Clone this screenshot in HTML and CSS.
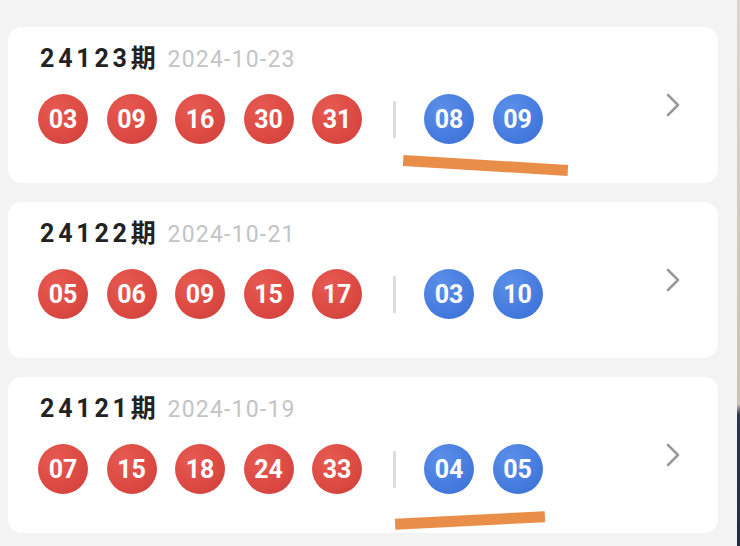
FILE: index.html
```html
<!DOCTYPE html>
<html lang="zh">
<head>
<meta charset="utf-8">
<title>开奖记录</title>
<link rel="stylesheet" href="styles.css">
</head>
<body>
<div class="page">
  <main class="list">
    <section class="card">
      <div class="info">
        <div class="head"><span class="issue">24123期</span><span class="date">2024-10-23</span></div>
        <div class="balls">
          <span class="ball red">03</span><span class="ball red">09</span><span class="ball red">16</span><span class="ball red">30</span><span class="ball red">31</span>
          <span class="sep"></span>
          <span class="ball blue">08</span><span class="ball blue">09</span>
        </div>
      </div>
      <svg class="chev" width="14" height="24" viewBox="0 0 14 24"><path d="M2 2 L12 12 L2 22" fill="none" stroke="#9a9a9a" stroke-width="2.6" stroke-linecap="round" stroke-linejoin="round"/></svg>
      <span class="mark mark1"></span>
    </section>
    <section class="card">
      <div class="info">
        <div class="head"><span class="issue">24122期</span><span class="date">2024-10-21</span></div>
        <div class="balls">
          <span class="ball red">05</span><span class="ball red">06</span><span class="ball red">09</span><span class="ball red">15</span><span class="ball red">17</span>
          <span class="sep"></span>
          <span class="ball blue">03</span><span class="ball blue">10</span>
        </div>
      </div>
      <svg class="chev" width="14" height="24" viewBox="0 0 14 24"><path d="M2 2 L12 12 L2 22" fill="none" stroke="#9a9a9a" stroke-width="2.6" stroke-linecap="round" stroke-linejoin="round"/></svg>
    </section>
    <section class="card">
      <div class="info">
        <div class="head"><span class="issue">24121期</span><span class="date">2024-10-19</span></div>
        <div class="balls">
          <span class="ball red">07</span><span class="ball red">15</span><span class="ball red">18</span><span class="ball red">24</span><span class="ball red">33</span>
          <span class="sep"></span>
          <span class="ball blue">04</span><span class="ball blue">05</span>
        </div>
      </div>
      <svg class="chev" width="14" height="24" viewBox="0 0 14 24"><path d="M2 2 L12 12 L2 22" fill="none" stroke="#9a9a9a" stroke-width="2.6" stroke-linecap="round" stroke-linejoin="round"/></svg>
      <span class="mark mark3"></span>
    </section>
  </main>
  <div class="edge"></div>
</div>
</body>
</html>
```

FILE: styles.css
```css
html, body {
  margin: 0;
  padding: 0;
  background: #f3f3f3;
}
body {
  font-family: Roboto, "Noto Sans CJK SC", sans-serif;
}
.page {
  display: flex;
  width: 740px;
  height: 546px;
  overflow: hidden;
}
.list {
  flex: 1;
  display: flex;
  flex-direction: column;
  gap: 19px;
  padding: 27px 19px 0 8px;
}
.card {
  position: relative;
  display: flex;
  align-items: center;
  justify-content: space-between;
  background: #ffffff;
  border-radius: 14px;
  height: 156px;
  box-sizing: border-box;
  padding: 0 38px 0 30px;
}
.info {
  align-self: flex-start;
  display: flex;
  flex-direction: column;
  gap: 19px;
  padding-top: 16px;
}
.head {
  display: flex;
  align-items: baseline;
  padding-left: 2px;
  height: 32px;
  line-height: 32px;
}
.issue {
  font-family: Roboto, "Noto Sans CJK SC", sans-serif;
  font-weight: 700;
  font-size: 25px;
  letter-spacing: 3.8px;
  color: #222222;
}
.date {
  margin-left: 8px;
  font-size: 23px;
  font-weight: 400;
  color: #c4c4c4;
  letter-spacing: 1.2px;
}
.balls {
  display: flex;
  align-items: center;
  gap: 18.5px;
}
.ball {
  width: 50px;
  height: 50px;
  border-radius: 50%;
  display: flex;
  align-items: center;
  justify-content: center;
  color: #ffffff;
  font-family: Roboto, sans-serif;
  font-weight: 700;
  font-size: 25px;
}
.red {
  background: radial-gradient(circle at 35% 30%, #e65a52 0%, #dc4a43 55%, #cc3f3a 100%);
}
.blue {
  background: radial-gradient(circle at 35% 30%, #5c8fe8 0%, #477ddf 55%, #3a6dd3 100%);
}
.sep {
  width: 3px;
  height: 37px;
  background: #dcdcdc;
  margin: 0 10px 0 12px;
  border-radius: 1px;
}
.chev {
  display: block;
}
.mark {
  position: absolute;
  height: 11px;
  background: #e98e48;
}
.mark1 {
  left: 395px;
  top: 133px;
  width: 165px;
  transform: rotate(3.4deg);
}
.mark3 {
  left: 387px;
  top: 138px;
  width: 150px;
  transform: rotate(-2.9deg);
}
.edge {
  width: 3px;
  background: linear-gradient(to bottom, #d9d4cd 0%, #c9c2b8 74%, #2d344b 76%, #262c40 100%);
}
```
